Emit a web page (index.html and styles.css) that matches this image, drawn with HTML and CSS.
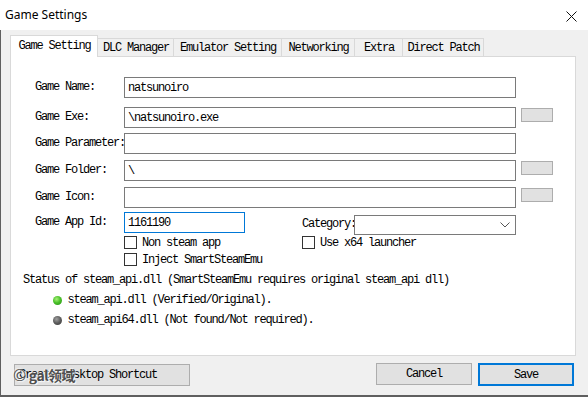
FILE: index.html
```html
<!DOCTYPE html>
<html lang="en">
<head>
    <meta charset="UTF-8">
    <meta name="viewport" content="width=device-width, initial-scale=1.0">
    <title>Game Settings</title>
    <link rel="stylesheet" href="styles.css">
</head>
<body>
    <!-- Window title bar -->
    <div class="titlebar">
        <span class="title">Game Settings</span>
        <svg class="close" width="11" height="11" viewBox="0 0 11 11">
            <path d="M0.5 0.5 L10.5 10.5 M10.5 0.5 L0.5 10.5" stroke="#111" stroke-width="1" fill="none"/>
        </svg>
    </div>

    <div class="client">
        <!-- Tabs -->
        <div class="tabs">
            <div class="tab active tab-game">Game Setting</div>
            <div class="tab tab-dlc">DLC Manager</div>
            <div class="tab tab-emu">Emulator Setting</div>
            <div class="tab tab-net">Networking</div>
            <div class="tab tab-extra">Extra</div>
            <div class="tab tab-patch">Direct Patch</div>
        </div>

        <!-- Game Setting page -->
        <div class="panel">
            <div class="fields">
                <label class="field-label">Game Name:</label>
                <input class="field" type="text" value="natsunoiro">
                <span></span>

                <label class="field-label">Game Exe:</label>
                <input class="field" type="text" value="\natsunoiro.exe">
                <button class="browse"></button>

                <label class="field-label">Game Parameter:</label>
                <input class="field" type="text" value="">
                <span></span>

                <label class="field-label">Game Folder:</label>
                <input class="field" type="text" value="\">
                <button class="browse"></button>

                <label class="field-label">Game Icon:</label>
                <input class="field" type="text" value="">
                <button class="browse"></button>
            </div>

            <div class="id-row">
                <label class="field-label">Game App Id:</label>
                <input class="field field-id" type="text" value="1161190">
                <div class="category">
                    <label class="category-label">Category:</label>
                    <div class="select">
                        <svg width="10" height="6" viewBox="0 0 10 6">
                            <path d="M0.5 0.5 L5 5 L9.5 0.5" stroke="#555" stroke-width="1" fill="none"/>
                        </svg>
                    </div>
                </div>
            </div>

            <div class="checks">
                <div class="check-row">
                    <div class="check check-wide"><span class="box"></span>Non steam app</div>
                    <div class="check"><span class="box"></span>Use x64 launcher</div>
                </div>
                <div class="check-row">
                    <div class="check"><span class="box"></span>Inject SmartSteamEmu</div>
                </div>
            </div>

            <p class="status">Status of steam_api.dll (SmartSteamEmu requires original steam_api dll)</p>
            <div class="dll dll-first"><span class="dot ok"></span>steam_api.dll (Verified/Original).</div>
            <div class="dll"><span class="dot none"></span>steam_api64.dll (Not found/Not required).</div>
        </div>

        <!-- Bottom buttons -->
        <div class="footer">
            <button class="btn btn-shortcut">Create Desktop Shortcut</button>
            <button class="btn btn-cancel">Cancel</button>
            <button class="btn btn-save">Save</button>
        </div>
    </div>

    <div class="watermark"><span class="copy">©</span>gal领域</div>
</body>
</html>
```

FILE: styles.css
```css
body {
    margin: 0;
    width: 588px;
    height: 397px;
    overflow: hidden;
    background-color: #f0f0f0;
    font-family: "Liberation Mono", monospace;
    font-size: 12px;
    letter-spacing: -1.2px;
    color: #000;
    position: relative;
}
.titlebar {
    height: 30px;
    background-color: #ffffff;
    display: flex;
    align-items: center;
    justify-content: space-between;
    padding: 0 11px 0 5px;
    box-sizing: border-box;
}
.title {
    font-family: "Noto Sans", sans-serif;
    font-size: 12px;
    letter-spacing: 0;
    padding-bottom: 1px;
}
.close {
    margin-top: 2px;
}
.client {
    height: 367px;
    box-sizing: border-box;
    border-left: 1px solid #5f5f5f;
    border-bottom: 2px solid #5f5f5f;
    padding-top: 5px;
}
.tabs {
    display: flex;
    align-items: flex-end;
    height: 21px;
    padding-left: 9px;
}
.tab {
    height: 18px;
    box-sizing: border-box;
    border: 1px solid #d9d9d9;
    border-bottom: none;
    background-color: #f0f0f0;
    text-align: center;
    line-height: 18px;
    margin-left: -1px;
    padding-left: 1px;
}
.tab.active {
    height: 22px;
    line-height: 21px;
    margin-left: 0;
    margin-bottom: -1px;
    background-color: #ffffff;
    position: relative;
    z-index: 1;
}
.tab-game { width: 88px; }
.tab-dlc { width: 77px; }
.tab-emu { width: 109px; }
.tab-net { width: 74px; }
.tab-extra { width: 49px; }
.tab-patch { width: 82px; }
.panel {
    margin-left: 9px;
    width: 566px;
    height: 300px;
    box-sizing: border-box;
    border: 1px solid #d9d9d9;
    background-color: #ffffff;
    padding: 20px 0 0 12px;
}
.fields {
    display: grid;
    grid-template-columns: 89px 392px 37px;
    grid-template-rows: 30px 26px 27px 27px 25px;
    margin-left: 12px;
}
.field-label {
    line-height: 20px;
    white-space: nowrap;
}
.field {
    height: 21px;
    box-sizing: border-box;
    border: 1px solid #7a7a7a;
    padding: 0 3px;
    margin: 0;
    font: inherit;
    letter-spacing: inherit;
    color: #000;
    outline: none;
}
.browse {
    height: 14px;
    width: 32px;
    margin: 1px 0 0 5px;
    padding: 0;
    background-color: #e1e1e1;
    border: 1px solid #adadad;
}
.id-row {
    display: flex;
    align-items: flex-start;
    margin-left: 12px;
}
.id-row .field-label {
    width: 89px;
}
.field-id {
    width: 121px;
    border-color: #0078d7;
}
.category {
    display: flex;
    align-items: center;
    margin-left: 57px;
    margin-top: 3px;
}
.category-label {
    width: 52px;
    line-height: 16px;
    margin-top: -2px;
}
.select {
    width: 162px;
    height: 20px;
    box-sizing: border-box;
    border: 1px solid #7a7a7a;
    display: flex;
    align-items: center;
    justify-content: flex-end;
    padding-right: 5px;
}
.checks {
    margin-left: 101px;
    margin-top: 1px;
}
.check-row {
    display: flex;
    height: 17px;
}
.check {
    display: flex;
    align-items: flex-start;
    line-height: 14px;
    white-space: nowrap;
}
.check-wide {
    width: 178px;
}
.box {
    width: 13px;
    height: 13px;
    box-sizing: border-box;
    border: 1px solid #333333;
    margin-right: 5px;
    flex-shrink: 0;
}
.status {
    margin: 2px 0 0 0;
    line-height: 16px;
    white-space: nowrap;
}
.dll {
    display: flex;
    align-items: center;
    height: 20px;
    margin-left: 29px;
    white-space: nowrap;
}
.dll-first {
    margin-top: 2px;
}
.dot {
    width: 9px;
    height: 9px;
    border-radius: 50%;
    margin-right: 6px;
    margin-left: 0.5px;
}
.dot.ok {
    background: radial-gradient(circle at 40% 35%, #a8f07a 0%, #4cc22a 45%, #1f8a12 100%);
}
.dot.none {
    background: radial-gradient(circle at 40% 35%, #a0a0a0 0%, #5c5c5c 50%, #333333 100%);
}
.footer {
    display: flex;
    align-items: flex-start;
    padding: 0 14px 0 13px;
    margin-top: 7px;
}
.btn {
    height: 22px;
    box-sizing: border-box;
    background-color: #e1e1e1;
    border: 1px solid #adadad;
    font: inherit;
    letter-spacing: inherit;
    color: #000;
    padding: 0;
    line-height: 20px;
}
.btn-shortcut {
    width: 176px;
    margin-top: 1px;
    text-align: left;
    padding-left: 4px;
}
.btn-cancel {
    width: 96px;
    margin-left: auto;
}
.btn-save {
    width: 96px;
    height: 23px;
    margin-left: 6px;
    border: 2px solid #0078d7;
}
.watermark {
    position: absolute;
    left: 13px;
    top: 365px;
    font-family: "Noto Sans CJK SC", "Noto Sans", sans-serif;
    font-size: 14px;
    font-weight: 700;
    letter-spacing: -0.5px;
    line-height: 18px;
    color: #4f4f4f;
    text-shadow: 1px 1px 1px rgba(255, 255, 255, 0.9), -1px -1px 1px rgba(255, 255, 255, 0.6);
}
.copy {
    font-size: 16px;
    font-weight: 400;
    margin-right: 3px;
}
```
